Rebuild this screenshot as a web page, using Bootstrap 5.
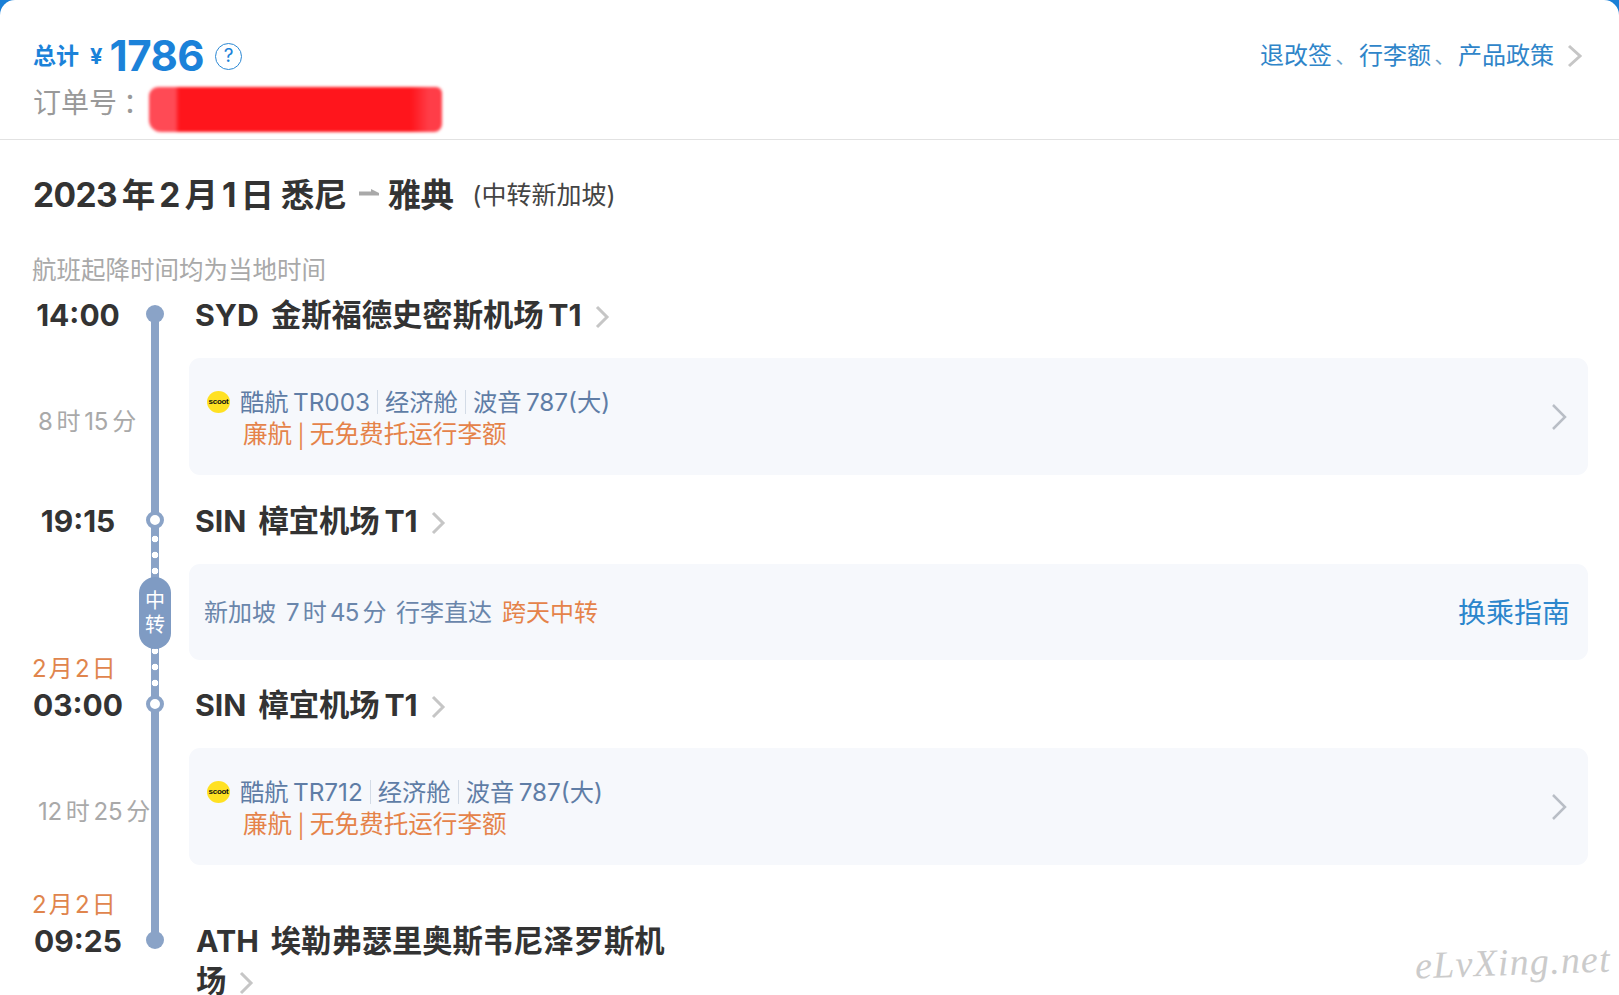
<!DOCTYPE html>
<html lang="zh-CN">
<head>
  <meta charset="UTF-8">
  <title>航班详情</title>
  <link href="https://cdn.jsdelivr.net/npm/bootstrap@5.3.0/dist/css/bootstrap.min.css" rel="stylesheet">
  <style>
    html, body { height: 995px; overflow: hidden; }
    body { background: #1a7fd6; font-family: Inter, "Noto Sans CJK SC", sans-serif; color: #333; }
    .sheet { position: relative; height: 995px; overflow: hidden; background: #fff; border-radius: 15px 15px 0 0; }

    /* header */
    .order-head { height: 140px; padding: 37px 36px 0 33px; border-bottom: 1px solid #e2e2e2; }
    .total-line { height: 38px; color: #1b82d9; font-weight: 700; }
    .total-label { font-size: 23px; }
    .total-yen { font-size: 22px; margin-left: 11px; }
    .total-num { font-size: 42px; line-height: 38px; margin-left: 7px; letter-spacing: -.5px; }
    .help-dot { width: 27px; height: 27px; margin-left: 11px; border: 1.5px solid #2b88d4; border-radius: 50%; font-size: 19px; font-weight: 400; line-height: 24px; text-align: center; }
    .order-line { height: 50px; margin-top: 3px; color: #999; font-size: 28px; }
    .order-colon { margin-left: 6px; }
    .scribble { width: 293px; height: 45px; margin: 12px 0 0 -2px; border-radius: 9px 6px 8px 12px; background: linear-gradient(90deg, #ff4a55 0, #ff4a55 26px, #ff151c 30px, #ff151c 262px, #ff3d48 280px); filter: blur(1.5px); }
    .policy-link { color: #2f85c9; font-size: 24px; line-height: 38px; height: 38px; }
    .policy-sep { display: inline-block; width: 27px; text-align: center; color: #6b9fc9; font-size: 20px; }
    .policy-chev { margin-left: 13px; }

    /* title */
    .route-title { height: 52px; margin: 29px 0 0 33px; font-size: 33.5px; font-weight: 700; line-height: 52px; white-space: nowrap; letter-spacing: -.6px; }
    .route-via { font-size: 25px; font-weight: 400; color: #444; margin-left: 19px; position: relative; top: -3px; letter-spacing: 0; }
    .route-arrow { margin: 0 9px 10px 12px; }
    .tz-note { height: 42px; margin: 30px 0 0 32px; color: #a9a9a9; font-size: 24.5px; line-height: 38px; }

    /* timeline */
    .tl-row { display: flex; }
    .tl-time { width: 141px; flex: none; position: relative; }
    .tl-axis { width: 28px; flex: none; position: relative; }
    .tl-axis::before { content: ""; position: absolute; left: 10px; top: 0; bottom: 0; width: 8px; background: #8aa3c7; }
    .tl-body { flex: 1; min-width: 0; padding: 0 31px 0 20px; }
    .stop-row { height: 44px; }
    .stop-time { font-size: 30px; font-weight: 700; line-height: 44px; text-align: center; padding-left: 15px; color: #333; white-space: nowrap; }
    .stop-name { font-size: 30.3px; font-weight: 700; line-height: 40px; padding: 2px 0 0 6px; color: #333; white-space: nowrap; }
    .stop-name .code { margin-right: 12px; }
    .stop-chev { margin-left: 13px; vertical-align: -3px; }
    .node { position: absolute; left: 5px; top: 12px; width: 18px; height: 18px; border-radius: 50%; background: #8aa3c7; z-index: 2; }
    .node-open { background: #fff; border: 4px solid #8aa3c7; }
    .axis-first::before { top: 21px; }
    .axis-last::before { bottom: auto; height: 21px; }

    .leg-row { height: 162px; }
    .leg-long { height: 192px; }
    .trip-card { background: #f6f8fc; border-radius: 11px; }
    .leg-card { height: 117px; margin-top: 21px; padding: 0 20px 0 18px; }
    .leg-line { font-size: 24.3px; line-height: 30px; color: #5f7da6; white-space: nowrap; padding-top: 1px; }
    .leg-warn { font-size: 24.6px; line-height: 30px; color: #e5834a; margin-left: 36px; white-space: nowrap; font-family: "Noto Sans CJK SC", sans-serif; }
    .scoot-logo { width: 23px; height: 22px; flex: none; margin-right: 10px; border-radius: 50%; background: #ffe122; color: #111; font: 700 8px/22px "Liberation Sans", sans-serif; text-align: center; letter-spacing: -.3px; }
    .leg-bar { display: inline-block; width: 1px; height: 24px; margin: 0 7px; background: #d3dbe6; vertical-align: -3px; }
    .dur-text { position: absolute; left: 38px; top: 67px; color: #a9a9a9; font-size: 24px; line-height: 36px; white-space: nowrap; letter-spacing: -.3px; }
    .date-text { position: absolute; left: 32px; bottom: -1px; color: #e0854d; font-size: 24px; line-height: 30px; white-space: nowrap; }

    .transfer-row { height: 140px; }
    .transfer-card { height: 96px; margin-top: 21px; padding: 1px 18px 0 15px; }
    .transfer-text { font-size: 24px; color: #6a86ab; white-space: nowrap; }
    .transfer-text .item { margin-right: 10px; }
    .transfer-text .item-dur { letter-spacing: -.6px; }
    .transfer-hot { color: #e5834a; }
    .guide-link { color: #2c86cc; font-size: 28px; }
    .dot-seg { position: absolute; left: 10px; top: -15px; bottom: -12px; width: 8px; z-index: 1; background: #8aa3c7 radial-gradient(circle, #fff 3px, transparent 3.6px) 0 3px / 8px 16px repeat-y; }
    .transfer-pill { position: absolute; left: -2px; top: 34px; width: 32px; height: 72px; z-index: 2; border-radius: 16px; background: #7f9bc3; color: #fff; font-size: 20px; line-height: 24px; text-align: center; padding-top: 12px; }

    .last-name { white-space: normal; width: 490px; padding-left: 7px; padding-top: 2px; }
    .watermark { position: absolute; left: 1415px; top: 940px; color: #cbcbcb; font: italic 38px "Liberation Serif", serif; letter-spacing: 1.2px; transform: rotate(-2deg); white-space: nowrap; }
  </style>
</head>
<body>
<div class="sheet">

  <!-- Order header -->
  <div class="order-head d-flex justify-content-between">
    <div>
      <div class="total-line d-flex align-items-center">
        <span class="total-label">总计</span>
        <span class="total-yen">¥</span>
        <span class="total-num">1786</span>
        <span class="help-dot">?</span>
      </div>
      <div class="order-line d-flex align-items-center">
        <span>订单号<span class="order-colon">：</span></span>
        <span class="scribble"></span>
      </div>
    </div>
    <div class="policy-link d-flex align-items-center">
      <span>退改签<span class="policy-sep">、</span>行李额<span class="policy-sep">、</span>产品政策</span>
      <svg class="policy-chev" width="16" height="24" viewBox="0 0 16 24" fill="none" stroke="#c6c6c6" stroke-width="3"><path d="M2 2l11 10L2 22"/></svg>
    </div>
  </div>

  <!-- Route title -->
  <div class="route-title">2023&thinsp;年&thinsp;2&thinsp;月&thinsp;1&thinsp;日 悉尼<svg class="route-arrow" width="20" height="7" viewBox="0 0 20 7"><path d="M0 2.5h12V0l8 4v2.5H0z" fill="#a9a9a9"/></svg>雅典<span class="route-via">(中转新加坡)</span></div>
  <div class="tz-note">航班起降时间均为当地时间</div>

  <!-- Timeline -->
  <div class="tl-row stop-row">
    <div class="tl-time stop-time">14:00</div>
    <div class="tl-axis axis-first"><span class="node"></span></div>
    <div class="tl-body"><div class="stop-name"><span class="code">SYD</span>金斯福德史密斯机场&thinsp;T1<svg class="stop-chev" width="15" height="24" viewBox="0 0 15 24" fill="none" stroke="#c6c6c6" stroke-width="3"><path d="M2 2l10 10L2 22"/></svg></div></div>
  </div>

  <div class="tl-row leg-row">
    <div class="tl-time"><span class="dur-text">8&thinsp;时&thinsp;15&thinsp;分</span></div>
    <div class="tl-axis"></div>
    <div class="tl-body">
      <div class="trip-card leg-card d-flex justify-content-between align-items-center">
        <div>
          <div class="leg-line d-flex align-items-center">
            <span class="scoot-logo">scoot</span>
            <span>酷航&thinsp;TR003<span class="leg-bar"></span>经济舱<span class="leg-bar"></span>波音&thinsp;787(大)</span>
          </div>
          <div class="leg-warn">廉航 | 无免费托运行李额</div>
        </div>
        <svg width="17" height="28" viewBox="0 0 17 28" fill="none" stroke="#b9bec6" stroke-width="2.5"><path d="M2 2l12 12L2 26"/></svg>
      </div>
    </div>
  </div>

  <div class="tl-row stop-row">
    <div class="tl-time stop-time">19:15</div>
    <div class="tl-axis"><span class="node node-open"></span></div>
    <div class="tl-body"><div class="stop-name"><span class="code">SIN</span>樟宜机场&thinsp;T1<svg class="stop-chev" width="15" height="24" viewBox="0 0 15 24" fill="none" stroke="#c6c6c6" stroke-width="3"><path d="M2 2l10 10L2 22"/></svg></div></div>
  </div>

  <div class="tl-row transfer-row">
    <div class="tl-time"><span class="date-text">2&#8202;月&#8202;2&#8202;日</span></div>
    <div class="tl-axis">
      <span class="dot-seg"></span>
      <span class="transfer-pill">中<br>转</span>
    </div>
    <div class="tl-body">
      <div class="trip-card transfer-card d-flex justify-content-between align-items-center">
        <div class="transfer-text"><span class="item">新加坡</span><span class="item item-dur">7&thinsp;时&thinsp;45&thinsp;分</span><span class="item">行李直达</span><span class="transfer-hot">跨天中转</span></div>
        <div class="guide-link">换乘指南</div>
      </div>
    </div>
  </div>

  <div class="tl-row stop-row">
    <div class="tl-time stop-time">03:00</div>
    <div class="tl-axis"><span class="node node-open"></span></div>
    <div class="tl-body"><div class="stop-name"><span class="code">SIN</span>樟宜机场&thinsp;T1<svg class="stop-chev" width="15" height="24" viewBox="0 0 15 24" fill="none" stroke="#c6c6c6" stroke-width="3"><path d="M2 2l10 10L2 22"/></svg></div></div>
  </div>

  <div class="tl-row leg-row leg-long">
    <div class="tl-time">
      <span class="dur-text">12&thinsp;时&thinsp;25&thinsp;分</span>
      <span class="date-text">2&#8202;月&#8202;2&#8202;日</span>
    </div>
    <div class="tl-axis"></div>
    <div class="tl-body">
      <div class="trip-card leg-card d-flex justify-content-between align-items-center">
        <div>
          <div class="leg-line d-flex align-items-center">
            <span class="scoot-logo">scoot</span>
            <span>酷航&thinsp;TR712<span class="leg-bar"></span>经济舱<span class="leg-bar"></span>波音&thinsp;787(大)</span>
          </div>
          <div class="leg-warn">廉航 | 无免费托运行李额</div>
        </div>
        <svg width="17" height="28" viewBox="0 0 17 28" fill="none" stroke="#b9bec6" stroke-width="2.5"><path d="M2 2l12 12L2 26"/></svg>
      </div>
    </div>
  </div>

  <div class="tl-row stop-row">
    <div class="tl-time stop-time">09:25</div>
    <div class="tl-axis axis-last"><span class="node"></span></div>
    <div class="tl-body"><div class="stop-name last-name"><span class="code">ATH</span>埃勒弗瑟里奥斯韦尼泽罗斯机场<svg class="stop-chev" width="15" height="24" viewBox="0 0 15 24" fill="none" stroke="#c6c6c6" stroke-width="3"><path d="M2 2l10 10L2 22"/></svg></div></div>
  </div>

  <div class="watermark">eLvXing.net</div>
</div>
<script src="https://cdn.jsdelivr.net/npm/bootstrap@5.3.0/dist/js/bootstrap.bundle.min.js"></script>
</body>
</html>
